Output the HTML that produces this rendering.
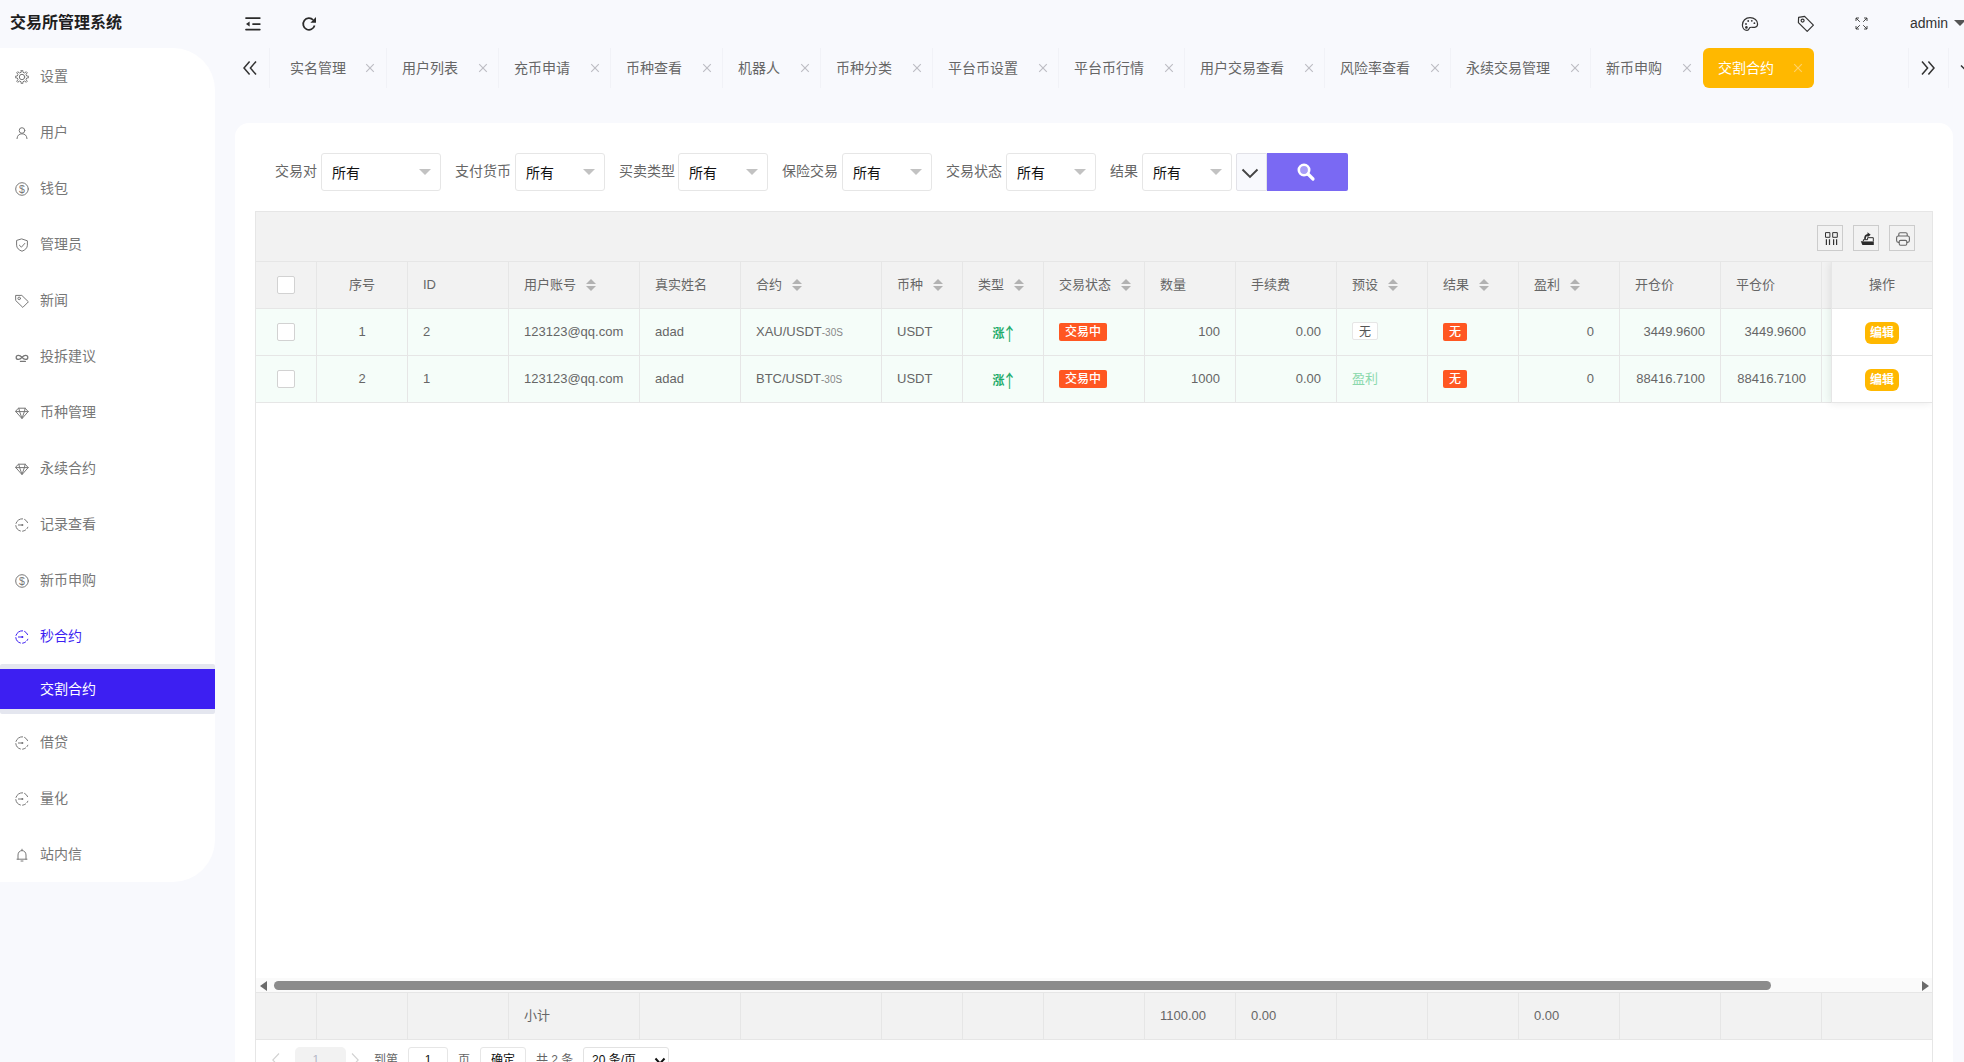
<!DOCTYPE html>
<html lang="zh-CN">
<head>
<meta charset="utf-8">
<title>交易所管理系统</title>
<style>
*{box-sizing:border-box;margin:0;padding:0}
html,body{width:1964px;height:1062px;overflow:hidden}
body{background:#f8f9fd;font-family:"Liberation Sans","Noto Sans CJK SC",sans-serif;font-size:14px;color:#666;position:relative}
.abs{position:absolute}
/* header */
#logo{left:10px;top:10px;height:26px;line-height:26px;font-size:16px;font-weight:bold;color:#1f1f1f;white-space:nowrap}
.hicon{position:absolute;top:14px;width:20px;height:20px}
#admin{left:1910px;top:12px;font-size:14px;color:#333;line-height:22px;white-space:nowrap}
#admin i{display:inline-block;border:6px solid transparent;border-top:6px solid #555;border-bottom:0;margin-left:6px;vertical-align:2px}
/* sidebar */
#side{left:0;top:48px;width:215px;height:834px;background:#fff;border-radius:0 42px 42px 0}
.mi{position:absolute;left:0;width:215px;height:56px;line-height:56px;color:#777;font-size:14px;white-space:nowrap}
.mi svg{position:absolute;left:15px;top:22px;width:14px;height:14px}
.mi span{position:absolute;left:40px;top:0}
.mi.on{color:#3d1ff2}
#subwrap{left:0;top:664px;width:215px;height:50px;background:#e4e6ef;border-radius:2px}
#sub{left:0;top:669px;width:215px;height:40px;line-height:40px;background:#3d1ff2;color:#fff;font-size:14px;padding-left:40px}
/* tabs */
#tabs{left:235px;top:48px;width:1729px;height:40px}
.tab{position:absolute;top:0;height:40px;line-height:40px;font-size:14px;color:#666;white-space:nowrap;border-left:1px solid #f1f2f7;padding-left:15px}
.tab b{position:absolute;top:15px;width:10px;height:10px}
.tab b svg{position:absolute;left:0;top:0;width:10px;height:10px;fill:none;stroke:#bdbdc4;stroke-width:1.150}
.tab.on{background:#ffb800;color:#fff;border-radius:6px;border-left:0;padding-left:15px}
.tab.on b svg{stroke:#ffd26a}
.tdiv{position:absolute;top:0;width:1px;height:40px;background:#f1f2f7}
/* card */
#card{left:235px;top:123px;width:1718px;height:960px;background:#fff;border-radius:14px}
.lab{position:absolute;top:153px;height:38px;line-height:36px;font-size:14px;color:#666;white-space:nowrap}
.sel{position:absolute;top:153px;height:38px;border:1px solid #e6e6e6;border-radius:3px;background:#fff;line-height:38px;padding-left:10px;color:#111;font-size:14px}
.sel i{position:absolute;right:9px;top:15px;border:6px solid transparent;border-top-color:#c2c2c2;border-bottom:0;width:0;height:0}
#more{left:1236px;top:153px;width:31px;height:38px;border:1px solid #e2e2e8;background:#f8f9fd;border-radius:2px 0 0 2px}
#search{left:1267px;top:153px;width:81px;height:38px;background:#7a69f3;border-radius:0 2px 2px 0}
/* table */
#tbl{left:255px;top:211px;width:1678px;height:860px;border:1px solid #e6e6e6;background:#fff}
#tool{left:256px;top:212px;width:1676px;height:49px;background:#f2f2f2}
.tbtn{position:absolute;top:225px;width:26px;height:26px;border:1px solid #ccc;background:#f2f2f2}
#thead{left:256px;top:261px;width:1676px;height:47px;background:#f2f2f2;border-top:1px solid #e6e6e6;border-bottom:1px solid #e6e6e6}
.row{position:absolute;left:256px;width:1676px;height:47px;overflow:hidden;background:#f5fdf9;border-bottom:1px solid #e6e6e6}
.c{position:absolute;top:0;height:100%;border-right:1px solid #e6e6e6;padding:0 15px;line-height:46px;white-space:nowrap;overflow:hidden;font-size:13px;color:#666}
.r{text-align:right}.m{text-align:center}
.sort{display:inline-block;position:relative;width:10px;height:14px;margin-left:10px;vertical-align:-3px}
.sort:before,.sort:after{content:"";position:absolute;left:0;border:5px solid transparent}
.sort:before{top:-4px;border-bottom-color:#b2b2b2}
.sort:after{top:8px;border-top-color:#b2b2b2}
.cb{position:absolute;left:21px;top:14px;width:18px;height:18px;border:1px solid #d2d2d2;border-radius:2px;background:#fff}
.bdg{display:inline-block;height:18px;line-height:18px;padding:0 6px;background:#ff5722;color:#fff;font-size:12px;border-radius:2px;vertical-align:middle;font-weight:500;position:relative;top:-1px}
.wbtn{position:relative;top:-2px;display:inline-block;height:18px;line-height:18px;padding:0 6px;background:#fff;border:1px solid #e6e6e6;color:#555;font-size:12px;border-radius:2px;vertical-align:middle}
.ebtn{display:inline-block;height:22px;line-height:22px;padding:0 5px;background:#ffb800;color:#fff;font-size:12px;border-radius:6px;vertical-align:middle;font-weight:bold}
#fixclip{left:1800px;top:262px;width:132px;height:720px;overflow:hidden}
#fix{left:31px;top:0;width:101px;height:141px;background:#fff;box-shadow:-1px 0 8px rgba(0,0,0,.09);border-left:1px solid #e6e6e6}
#sumrow{left:256px;top:992px;width:1676px;height:48px;background:#f2f2f2;border-top:1px solid #e6e6e6;border-bottom:1px solid #e6e6e6}
#sumrow .c{line-height:46px}
.tbtn svg{position:absolute;left:-1px;top:-1px;width:26px;height:26px}
.up{color:#22ab6a;font-weight:bold;font-size:12px;position:relative;top:2px}
.up em{font-style:normal;font-size:18px;font-weight:normal;font-family:"Noto Sans CJK SC",sans-serif;display:inline-block;width:9px;text-indent:-4.5px;vertical-align:-3px;line-height:20px;transform:scaleX(.8);transform-origin:50% 50%}
small{font-size:10px;color:#888}
.win{color:#8ad8ac}
#fix .fh{height:47px;line-height:46px;text-align:center;background:#f2f2f2;border-bottom:1px solid #e6e6e6;color:#666;font-size:13px}
#fix .fr{height:47px;line-height:46px;text-align:center;border-bottom:1px solid #e6e6e6;background:#fff}
#pager{left:0;top:1047px;width:1964px;height:28px}
.pg{top:0;height:28px;line-height:26px;font-size:12px;color:#666;white-space:nowrap}
.pr{padding-right:25px}
</style>
</head>
<body>
<div id="logo" class="abs">交易所管理系统</div>
<svg class="abs" style="left:244px;top:15px;width:18px;height:18px" viewBox="0 0 18 18" fill="none" stroke="#2b2b2b" stroke-width="1.750" stroke-linecap="round"><path d="M2 3H15.800M9 9H15.800M2 14.500H15.800"/><path d="M5.6 6.6V11.4L2 9Z" fill="#2b2b2b" stroke="none"/></svg>
<svg class="abs" style="left:300px;top:15px;width:18px;height:18px" viewBox="0 0 18 18" fill="none" stroke="#2b2b2b" stroke-width="1.750"><path d="M14.600 10.600A5.800 5.800 0 1 1 13.200 5"/><path d="M16 2V7.8H10.4Z" fill="#2b2b2b" stroke="none"/></svg>
<svg class="abs" style="left:1741px;top:16px;width:18px;height:16px" viewBox="0 0 18 16" fill="none" stroke="#333" stroke-width="1.2"><path d="M9 1.6C4.6 1.6 1.4 4.8 1.4 9C1.4 12 3.4 14.4 6 14.4C8.2 14.4 7.8 12.4 9 11.6C10.4 10.8 12 11.6 13.6 11.4C15.4 11.2 16.6 9.8 16.6 8C16.6 4.4 13.4 1.6 9 1.6Z"/><circle cx="5" cy="8" r="0.9" fill="#333" stroke="none"/><circle cx="7.2" cy="5" r="0.9" fill="#333" stroke="none"/><circle cx="10.8" cy="4.8" r="0.9" fill="#333" stroke="none"/><circle cx="13.4" cy="7.2" r="0.9" fill="#333" stroke="none"/><circle cx="5.4" cy="11.4" r="1.3" fill="#333" stroke="none"/></svg>
<svg class="abs" style="left:1797px;top:15px;width:18px;height:18px" viewBox="0 0 18 18" fill="none" stroke="#333" stroke-width="1.2" stroke-linejoin="round"><path d="M1.6 2.4L7.6 1.4L16.4 10.2L10.2 16.4L1.4 7.6Z"/><circle cx="5.6" cy="5.6" r="1.5"/></svg>
<svg class="abs" style="left:1854px;top:16px;width:15px;height:15px" viewBox="0 0 15 15" fill="none" stroke="#333" stroke-width="0.900"><path d="M2 5V2H5M2 2L5.800 5.800M10 2H13V5M13 2L9.200 5.800M2 10V13H5M2 13L5.800 9.200M13 10V13H10M13 13L9.200 9.200"/></svg>
<div id="admin" class="abs">admin<i></i></div>
<div id="side" class="abs"></div>
<div class="mi" style="top:48px"><svg viewBox="0 0 14 14" fill="none" stroke="currentColor" stroke-width="1" stroke-linecap="round" ><path d="M6.31 0.24L7.69 0.24L8.01 2.31L9.60 2.97L11.29 1.73L12.27 2.71L11.03 4.40L11.69 5.99L13.76 6.31L13.76 7.69L11.69 8.01L11.03 9.60L12.27 11.29L11.29 12.27L9.60 11.03L8.01 11.69L7.69 13.76L6.31 13.76L5.99 11.69L4.40 11.03L2.71 12.27L1.73 11.29L2.97 9.60L2.31 8.01L0.24 7.69L0.24 6.31L2.31 5.99L2.97 4.40L1.73 2.71L2.71 1.73L4.40 2.97L5.99 2.31Z" stroke-linejoin="round"/><circle cx="7" cy="7" r="2.700"/></svg><span>设置</span></div>
<div class="mi" style="top:104px"><svg viewBox="0 0 14 14" fill="none" stroke="currentColor" stroke-width="1" stroke-linecap="round" ><circle cx="7" cy="4.500" r="2.800"/><path d="M2 12.600C2.200 9.400 4.200 7.800 7 7.800S11.800 9.400 12 12.600"/></svg><span>用户</span></div>
<div class="mi" style="top:160px"><svg viewBox="0 0 14 14" fill="none" stroke="currentColor" stroke-width="1" stroke-linecap="round" ><circle cx="7" cy="7" r="6.3"/><text x="7" y="10.700" font-size="10.500" text-anchor="middle" fill="currentColor" stroke="none" font-family="Liberation Sans,sans-serif">$</text></svg><span>钱包</span></div>
<div class="mi" style="top:216px"><svg viewBox="0 0 14 14" fill="none" stroke="currentColor" stroke-width="1" stroke-linecap="round" ><path d="M7 1L12.4 2.8V7.2C12.4 10 10 12.2 7 13.2C4 12.2 1.6 10 1.6 7.2V2.8Z" stroke-linejoin="round"/><path d="M4.4 7.2L6.4 9.2L9.8 5.4"/></svg><span>管理员</span></div>
<div class="mi" style="top:272px"><svg viewBox="0 0 14 14" fill="none" stroke="currentColor" stroke-width="1" stroke-linecap="round" ><path d="M1 1.400H6.800L13.400 7.800L7.800 13.400L1 6.800Z" stroke-linejoin="round"/><circle cx="4.200" cy="4.400" r="1.300"/></svg><span>新闻</span></div>
<div class="mi" style="top:328px"><svg viewBox="0 0 14 14" fill="none" stroke="currentColor" stroke-width="1" stroke-linecap="round" ><path stroke-width="1.300" d="M7 7.4C5.8 8.8 4.6 9.4 3.4 9.4C2 9.4 1.2 8.4 1.2 7.4S2 5.4 3.4 5.4C4.6 5.4 5.8 6 7 7.4S9.4 9.4 10.6 9.4C12 9.4 12.8 8.4 12.8 7.4S12 5.4 10.6 5.4C9.4 5.4 8.2 6 7 7.4Z"/><path stroke-width="1.200" d="M5.400 11.400H10.400"/></svg><span>投拆建议</span></div>
<div class="mi" style="top:384px"><svg viewBox="0 0 14 14" fill="none" stroke="currentColor" stroke-width="1" stroke-linecap="round" ><path d="M3.8 2.2H10.2L13.2 5.6L7 12.6L0.8 5.6Z" stroke-linejoin="round"/><path d="M0.8 5.6H13.2M4.6 5.6L7 12.4L9.4 5.6M3.8 2.2L4.6 5.6M10.2 2.2L9.4 5.6"/></svg><span>币种管理</span></div>
<div class="mi" style="top:440px"><svg viewBox="0 0 14 14" fill="none" stroke="currentColor" stroke-width="1" stroke-linecap="round" ><path d="M3.8 2.2H10.2L13.2 5.6L7 12.6L0.8 5.6Z" stroke-linejoin="round"/><path d="M0.8 5.6H13.2M4.6 5.6L7 12.4L9.4 5.6M3.8 2.2L4.6 5.6M10.2 2.2L9.4 5.6"/></svg><span>永续合约</span></div>
<div class="mi" style="top:496px"><svg viewBox="0 0 14 14" fill="none" stroke="currentColor" stroke-width="1" stroke-linecap="round" ><path d="M12.6 4.6A6.2 6.2 0 0 0 9.6 1.4M7.6 0.8A6.2 6.2 0 0 0 1 5.4M0.8 7.6A6.2 6.2 0 0 0 5.4 13M7.6 13.2A6.2 6.2 0 0 0 10.6 12M12 10.6A6.2 6.2 0 0 0 12.8 9.2"/><circle cx="7.4" cy="7" r="1" fill="currentColor" stroke="none"/><path d="M3.4 7H7"/></svg><span>记录查看</span></div>
<div class="mi" style="top:552px"><svg viewBox="0 0 14 14" fill="none" stroke="currentColor" stroke-width="1" stroke-linecap="round" ><circle cx="7" cy="7" r="6.3"/><text x="7" y="10.700" font-size="10.500" text-anchor="middle" fill="currentColor" stroke="none" font-family="Liberation Sans,sans-serif">$</text></svg><span>新币申购</span></div>
<div class="mi on" style="top:608px"><svg viewBox="0 0 14 14" fill="none" stroke="currentColor" stroke-width="1" stroke-linecap="round" ><path d="M12.6 4.6A6.2 6.2 0 0 0 9.6 1.4M7.6 0.8A6.2 6.2 0 0 0 1 5.4M0.8 7.6A6.2 6.2 0 0 0 5.4 13M7.6 13.2A6.2 6.2 0 0 0 10.6 12M12 10.6A6.2 6.2 0 0 0 12.8 9.2"/><circle cx="7.4" cy="7" r="1" fill="currentColor" stroke="none"/><path d="M3.4 7H7"/></svg><span>秒合约</span></div>
<div id="subwrap" class="abs"></div><div id="sub" class="abs">交割合约</div>
<div class="mi" style="top:714px"><svg viewBox="0 0 14 14" fill="none" stroke="currentColor" stroke-width="1" stroke-linecap="round" ><path d="M12.6 4.6A6.2 6.2 0 0 0 9.6 1.4M7.6 0.8A6.2 6.2 0 0 0 1 5.4M0.8 7.6A6.2 6.2 0 0 0 5.4 13M7.6 13.2A6.2 6.2 0 0 0 10.6 12M12 10.6A6.2 6.2 0 0 0 12.8 9.2"/><circle cx="7.4" cy="7" r="1" fill="currentColor" stroke="none"/><path d="M3.4 7H7"/></svg><span>借贷</span></div>
<div class="mi" style="top:770px"><svg viewBox="0 0 14 14" fill="none" stroke="currentColor" stroke-width="1" stroke-linecap="round" ><path d="M12.6 4.6A6.2 6.2 0 0 0 9.6 1.4M7.6 0.8A6.2 6.2 0 0 0 1 5.4M0.8 7.6A6.2 6.2 0 0 0 5.4 13M7.6 13.2A6.2 6.2 0 0 0 10.6 12M12 10.6A6.2 6.2 0 0 0 12.8 9.2"/><circle cx="7.4" cy="7" r="1" fill="currentColor" stroke="none"/><path d="M3.4 7H7"/></svg><span>量化</span></div>
<div class="mi" style="top:826px"><svg viewBox="0 0 14 14" fill="none" stroke="currentColor" stroke-width="1" stroke-linecap="round" ><path d="M2 11.2H12M3 11.2V7C3 4.4 4.8 2.6 7 2.6S11 4.4 11 7V11.2M6 13H8M7 1.2V2.6"/></svg><span>站内信</span></div>
<div id="tabs" class="abs">
<svg class="abs" style="left:7px;top:11px;width:16px;height:18px" viewBox="0 0 16 18" fill="none" stroke="#333" stroke-width="1.5"><path d="M7.6 2.4L2 9L7.6 15.6M14 2.4L8.4 9L14 15.6"/></svg>
<div class="tdiv" style="left:34px"></div>
<div class="tab" style="left:39.0px;width:112px;border-left:0;padding-left:16px">实名管理<b style="left:91px"><svg viewBox="0 0 10 10"><path d="M1.200 1.200L8.800 8.800M8.800 1.200L1.200 8.800"/></svg></b></div>
<div class="tab" style="left:151.0px;width:112px">用户列表<b style="left:91px"><svg viewBox="0 0 10 10"><path d="M1.200 1.200L8.800 8.800M8.800 1.200L1.200 8.800"/></svg></b></div>
<div class="tab" style="left:263.0px;width:112px">充币申请<b style="left:91px"><svg viewBox="0 0 10 10"><path d="M1.200 1.200L8.800 8.800M8.800 1.200L1.200 8.800"/></svg></b></div>
<div class="tab" style="left:375.0px;width:112px">币种查看<b style="left:91px"><svg viewBox="0 0 10 10"><path d="M1.200 1.200L8.800 8.800M8.800 1.200L1.200 8.800"/></svg></b></div>
<div class="tab" style="left:487.0px;width:98px">机器人<b style="left:77px"><svg viewBox="0 0 10 10"><path d="M1.200 1.200L8.800 8.800M8.800 1.200L1.200 8.800"/></svg></b></div>
<div class="tab" style="left:585.0px;width:112px">币种分类<b style="left:91px"><svg viewBox="0 0 10 10"><path d="M1.200 1.200L8.800 8.800M8.800 1.200L1.200 8.800"/></svg></b></div>
<div class="tab" style="left:697.0px;width:126px">平台币设置<b style="left:105px"><svg viewBox="0 0 10 10"><path d="M1.200 1.200L8.800 8.800M8.800 1.200L1.200 8.800"/></svg></b></div>
<div class="tab" style="left:823.0px;width:126px">平台币行情<b style="left:105px"><svg viewBox="0 0 10 10"><path d="M1.200 1.200L8.800 8.800M8.800 1.200L1.200 8.800"/></svg></b></div>
<div class="tab" style="left:949.0px;width:140px">用户交易查看<b style="left:119px"><svg viewBox="0 0 10 10"><path d="M1.200 1.200L8.800 8.800M8.800 1.200L1.200 8.800"/></svg></b></div>
<div class="tab" style="left:1089.0px;width:126px">风险率查看<b style="left:105px"><svg viewBox="0 0 10 10"><path d="M1.200 1.200L8.800 8.800M8.800 1.200L1.200 8.800"/></svg></b></div>
<div class="tab" style="left:1215.0px;width:140px">永续交易管理<b style="left:119px"><svg viewBox="0 0 10 10"><path d="M1.200 1.200L8.800 8.800M8.800 1.200L1.200 8.800"/></svg></b></div>
<div class="tab" style="left:1355.0px;width:112px">新币申购<b style="left:91px"><svg viewBox="0 0 10 10"><path d="M1.200 1.200L8.800 8.800M8.800 1.200L1.200 8.800"/></svg></b></div>
<div class="tab on" style="left:1468.0px;width:111px">交割合约<b style="left:90px"><svg viewBox="0 0 10 10"><path d="M1.200 1.200L8.800 8.800M8.800 1.200L1.200 8.800"/></svg></b></div>
<div class="tdiv" style="left:1673px"></div>
<svg class="abs" style="left:1685px;top:11px;width:16px;height:18px" viewBox="0 0 16 18" fill="none" stroke="#333" stroke-width="1.5"><path d="M2 2.4L7.6 9L2 15.6M8.4 2.4L14 9L8.4 15.6"/></svg>
<div class="tdiv" style="left:1713px"></div>
<svg class="abs" style="left:1725px;top:14px;width:12px;height:12px" viewBox="0 0 12 12" fill="none" stroke="#333" stroke-width="1.5"><path d="M1 3.4L6 8.6L11 3.4"/></svg>
</div>
<div id="card" class="abs"></div>
<div class="lab" style="left:275px">交易对</div><div class="sel" style="left:321px;width:120px">所有<i></i></div>
<div class="lab" style="left:455px">支付货币</div><div class="sel" style="left:515px;width:90px">所有<i></i></div>
<div class="lab" style="left:619px">买卖类型</div><div class="sel" style="left:678px;width:90px">所有<i></i></div>
<div class="lab" style="left:782px">保险交易</div><div class="sel" style="left:842px;width:90px">所有<i></i></div>
<div class="lab" style="left:946px">交易状态</div><div class="sel" style="left:1006px;width:90px">所有<i></i></div>
<div class="lab" style="left:1110px">结果</div><div class="sel" style="left:1142px;width:90px">所有<i></i></div>
<div id="more" class="abs"><svg style="position:absolute;left:3.500px;top:11px;width:18px;height:16px" viewBox="0 0 18 16" fill="none" stroke="#444" stroke-width="1.900"><path d="M1.500 4.500L9 12L16.500 4.500"/></svg></div>
<div id="search" class="abs"><svg style="position:absolute;left:28.500px;top:9px;width:20px;height:20px" viewBox="0 0 20 20" fill="none" stroke="#fff" stroke-width="2.6"><circle cx="8" cy="8" r="5.200" fill="rgba(255,255,255,.35)"/><path d="M12 12L17 17" stroke-linecap="round" stroke-width="3.200"/></svg></div>
<div id="tbl" class="abs"></div><div id="tool" class="abs"></div>
<div class="tbtn" style="left:1817px"><svg viewBox="0 0 26 26" fill="none" stroke="#333"><path stroke-width="1" d="M8.500 7.600H12.900V12.300H8.500ZM15.700 7.600H20.300V12.300H15.700Z"/><path stroke-width="1.200" d="M9.400 14.200V19.900M12.500 14.200V19.900M16.600 14.200V19.900M19.600 14.200V19.900"/></svg></div>
<div class="tbtn" style="left:1853px"><svg viewBox="0 0 26 26" fill="#2b2b2b" stroke="none"><path d="M7.800 16.200H20.800V20.100H9.400Z"/><path d="M10.400 16.200V14.700H14.600V12.700H20.300V16.200" fill="#fafafa" stroke="#2b2b2b" stroke-width="1"/><path d="M12 14.200C11.800 11.600 13 10 15 9.800" fill="none" stroke="#2b2b2b" stroke-width="1.700"/><path d="M14.500 7.200L17.700 9.700L14.500 12.200Z"/></svg></div>
<div class="tbtn" style="left:1889px"><svg viewBox="0 0 26 26" fill="none" stroke="#666" stroke-width="1.100"><path d="M9.800 11V9C9.800 8.200 10.400 7.700 11.200 7.700H16.800C17.600 7.700 18.200 8.200 18.200 9V11"/><rect x="7.600" y="11" width="12.800" height="6.400" rx="1.800"/><rect x="10.200" y="15.400" width="7.600" height="4.800" rx="1.400" fill="#f2f2f2"/></svg></div>
<div class="abs" style="left:256px;top:261px;width:1676px;height:48px;background:#f2f2f2;border-top:1px solid #e6e6e6;border-bottom:1px solid #e6e6e6;overflow:hidden" id="thead"><div class="c " style="left:0px;width:61px"><i class="cb"></i></div><div class="c m" style="left:61px;width:91px">序号</div><div class="c " style="left:152px;width:101px">ID</div><div class="c " style="left:253px;width:131px">用户账号<i class="sort"></i></div><div class="c " style="left:384px;width:101px">真实姓名</div><div class="c " style="left:485px;width:141px">合约<i class="sort"></i></div><div class="c " style="left:626px;width:81px">币种<i class="sort"></i></div><div class="c " style="left:707px;width:81px">类型<i class="sort"></i></div><div class="c " style="left:788px;width:101px">交易状态<i class="sort"></i></div><div class="c " style="left:889px;width:91px">数量</div><div class="c " style="left:980px;width:101px">手续费</div><div class="c " style="left:1081px;width:91px">预设<i class="sort"></i></div><div class="c " style="left:1172px;width:91px">结果<i class="sort"></i></div><div class="c " style="left:1263px;width:101px">盈利<i class="sort"></i></div><div class="c " style="left:1364px;width:101px">开仓价</div><div class="c " style="left:1465px;width:101px">平仓价</div><div class="c " style="left:1566px;width:120px"></div></div>
<div class="row" style="top:309px"><div class="c " style="left:0px;width:61px"><i class="cb"></i></div><div class="c m" style="left:61px;width:91px">1</div><div class="c " style="left:152px;width:101px">2</div><div class="c " style="left:253px;width:131px">123123@qq.com</div><div class="c " style="left:384px;width:101px">adad</div><div class="c " style="left:485px;width:141px">XAU/USDT<small>-30S</small></div><div class="c " style="left:626px;width:81px">USDT</div><div class="c m" style="left:707px;width:81px"><span class="up">涨<em>↑</em></span></div><div class="c " style="left:788px;width:101px"><span class="bdg">交易中</span></div><div class="c r" style="left:889px;width:91px">100</div><div class="c r" style="left:980px;width:101px">0.00</div><div class="c " style="left:1081px;width:91px"><span class="wbtn">无</span></div><div class="c " style="left:1172px;width:91px"><span class="bdg">无</span></div><div class="c r pr" style="left:1263px;width:101px">0</div><div class="c r" style="left:1364px;width:101px">3449.9600</div><div class="c r" style="left:1465px;width:101px">3449.9600</div><div class="c " style="left:1566px;width:120px"></div></div>
<div class="row" style="top:356px"><div class="c " style="left:0px;width:61px"><i class="cb"></i></div><div class="c m" style="left:61px;width:91px">2</div><div class="c " style="left:152px;width:101px">1</div><div class="c " style="left:253px;width:131px">123123@qq.com</div><div class="c " style="left:384px;width:101px">adad</div><div class="c " style="left:485px;width:141px">BTC/USDT<small>-30S</small></div><div class="c " style="left:626px;width:81px">USDT</div><div class="c m" style="left:707px;width:81px"><span class="up">涨<em>↑</em></span></div><div class="c " style="left:788px;width:101px"><span class="bdg">交易中</span></div><div class="c r" style="left:889px;width:91px">1000</div><div class="c r" style="left:980px;width:101px">0.00</div><div class="c " style="left:1081px;width:91px"><span class="win">盈利</span></div><div class="c " style="left:1172px;width:91px"><span class="bdg">无</span></div><div class="c r pr" style="left:1263px;width:101px">0</div><div class="c r" style="left:1364px;width:101px">88416.7100</div><div class="c r" style="left:1465px;width:101px">88416.7100</div><div class="c " style="left:1566px;width:120px"></div></div>
<div id="fixclip" class="abs"><div id="fix" class="abs"><div class="fh">操作</div><div class="fr"><span class="ebtn">编辑</span></div><div class="fr"><span class="ebtn">编辑</span></div></div></div>
<div class="abs" style="left:256px;top:978px;width:1676px;height:14px;background:#fafafa"></div>
<div class="abs" style="left:274px;top:980.6px;width:1497px;height:9.6px;border-radius:5px;background:#8b8b8b"></div>
<div class="abs" style="left:260px;top:980.500px;border:5px solid transparent;border-right:7px solid #6a6a6a;border-left:0"></div>
<div class="abs" style="left:1922px;top:980.500px;border:5px solid transparent;border-left:7px solid #6a6a6a;border-right:0"></div>
<div class="abs" style="left:256px;top:992px;width:1676px;height:48px;border-top:1px solid #e6e6e6;border-bottom:1px solid #e6e6e6;background:#f2f2f2;overflow:hidden" id="sumrow"><div class="c " style="left:0px;width:61px"></div><div class="c " style="left:61px;width:91px"></div><div class="c " style="left:152px;width:101px"></div><div class="c " style="left:253px;width:131px">小计</div><div class="c " style="left:384px;width:101px"></div><div class="c " style="left:485px;width:141px"></div><div class="c " style="left:626px;width:81px"></div><div class="c " style="left:707px;width:81px"></div><div class="c " style="left:788px;width:101px"></div><div class="c " style="left:889px;width:91px">1100.00</div><div class="c " style="left:980px;width:101px">0.00</div><div class="c " style="left:1081px;width:91px"></div><div class="c " style="left:1172px;width:91px"></div><div class="c " style="left:1263px;width:101px">0.00</div><div class="c " style="left:1364px;width:101px"></div><div class="c " style="left:1465px;width:101px"></div><div class="c " style="left:1566px;width:120px"></div></div>
<div id="pager" class="abs">
<svg class="abs" style="left:271px;top:5px;width:10px;height:16px" viewBox="0 0 10 16" fill="none" stroke="#d2d2d2" stroke-width="1.1"><path d="M8 1.500L1.800 8L8 14.500"/></svg>
<span class="abs pg" style="left:295px;width:51px;background:#f2f2f2;border-radius:5px;text-align:left;padding-left:17.500px;color:#b4b8c6">1</span>
<svg class="abs" style="left:350px;top:5px;width:10px;height:16px" viewBox="0 0 10 16" fill="none" stroke="#d2d2d2" stroke-width="1.1"><path d="M2 1.500L8.200 8L2 14.500"/></svg>
<span class="abs pg" style="left:374px">到第</span>
<span class="abs pg" style="left:408px;width:40px;border:1px solid #e6e6e6;border-radius:3px;text-align:center;color:#111;line-height:24px;background:#fff">1</span>
<span class="abs pg" style="left:458px">页</span>
<span class="abs pg" style="left:480px;width:46px;border:1px solid #e6e6e6;border-radius:3px;text-align:center;color:#111;line-height:24px;background:#fff">确定</span>
<span class="abs pg" style="left:536px">共 2 条</span>
<span class="abs pg" style="left:583px;width:86px;border:1px solid #e2e2e2;border-radius:3px;padding-left:8px;color:#111;line-height:24px;background:#fff">20 条/页</span>
<svg class="abs" style="left:654px;top:8.500px;width:12px;height:10px" viewBox="0 0 12 10" fill="none" stroke="#111" stroke-width="2"><path d="M1.500 2.500L6 7.500L10.500 2.500"/></svg>
</div>
</body>
</html>
